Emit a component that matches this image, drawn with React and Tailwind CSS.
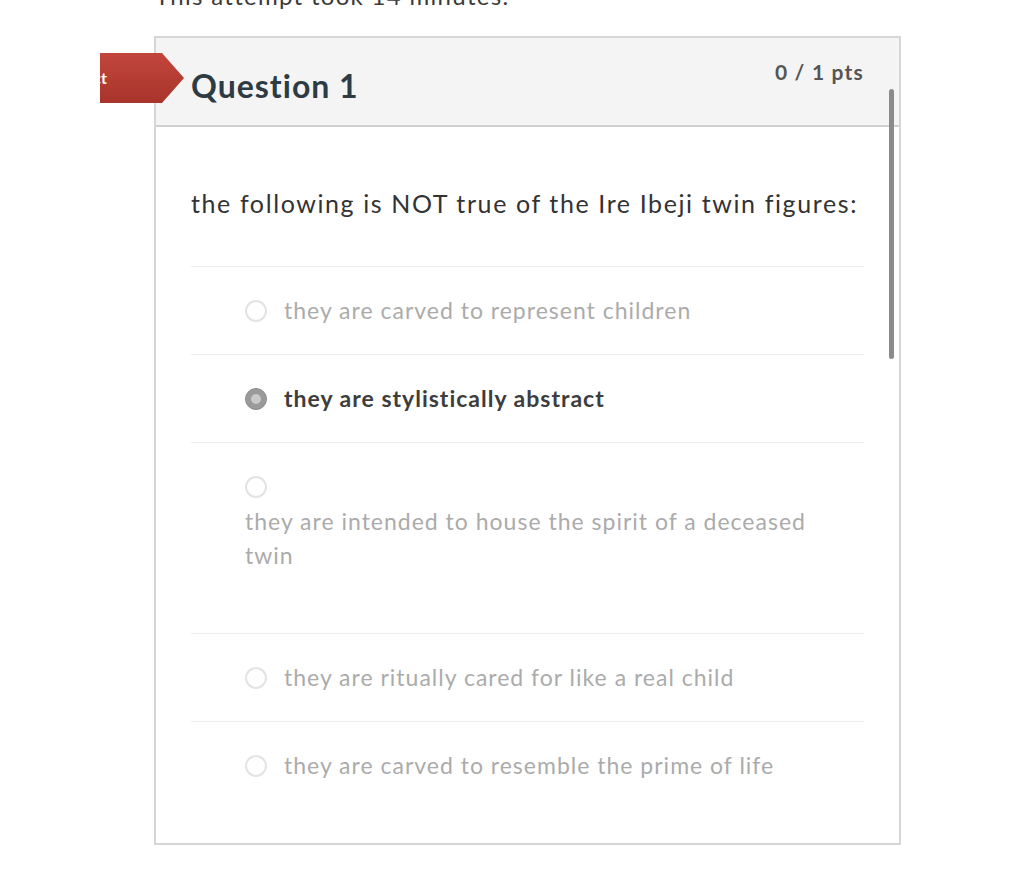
import React from 'react';

const answers = [
  { text: 'they are carved to represent children' },
  { text: 'they are stylistically abstract', selected: true },
  { text: 'they are intended to house the spirit of a deceased twin', stacked: true },
  { text: 'they are ritually cared for like a real child' },
  { text: 'they are carved to resemble the prime of life' },
];

function Radio({ selected }) {
  if (selected) {
    return (
      <span className="w-[22px] h-[22px] shrink-0 rounded-full bg-[#9a9a9a] flex items-center justify-center border border-[#8a8a8a]">
        <span className="w-[10px] h-[10px] rounded-full bg-[#c9c9c9]" />
      </span>
    );
  }
  return <span className="block w-[22px] h-[22px] shrink-0 rounded-full border-2 border-[#e3e3e3] bg-white" />;
}

function Answer({ a }) {
  if (a.stacked) {
    return (
      <div className="border-t border-[#ececec] h-[191px] pt-[33px] pl-[54px]">
        <Radio />
        <p className="mt-[6px] max-w-[575px] text-[23px] leading-[34px] text-[#ababab] tracking-[1px]">{a.text}</p>
      </div>
    );
  }
  return (
    <div className="border-t border-[#ececec] h-[88px] flex items-center gap-[17px] pl-[54px]">
      <Radio selected={a.selected} />
      <span
        className={`text-[23px] tracking-[1px] ${
          a.selected ? 'text-[#3d3d3d] font-bold tracking-[0.3px]' : 'text-[#ababab]'
        }`}
      >
        {a.text}
      </span>
    </div>
  );
}

export default function App() {
  return (
    <div className="min-h-[878px] bg-white font-['Lato','Liberation_Sans',sans-serif] overflow-hidden relative">
      <p className="absolute left-[155px] top-[-19px] text-[24px] leading-[30px] text-[#3a3a3a] tracking-[1.3px]">
        This attempt took 14 minutes.
      </p>

      <div className="pt-[36px] pl-[154px]">
        <div className="relative w-[747px] h-[809px] border-2 border-[#d6d6d6]">
          {/* header */}
          <div className="h-[89px] bg-[#f4f4f4] border-b-2 border-[#cfcfcf] flex items-start justify-between pl-[35px] pr-[35px]">
            <h2 className="mt-[30px] text-[32px] leading-[36px] font-bold text-[#2d3b45] tracking-[1px]">Question 1</h2>
            <span className="mt-[20px] text-[21px] leading-[28px] font-bold text-[#555] tracking-[1.2px]">0 / 1 pts</span>
          </div>

          {/* result tag */}
          <div className="absolute left-[-56px] top-[15px] w-[84px] h-[50px] overflow-hidden">
            <div className="h-full w-full bg-gradient-to-b from-[#c2463c] to-[#a8342b] [clip-path:polygon(0_0,62px_0,84px_50%,62px_100%,0_100%)] flex items-center justify-end pr-[77px]">
              <span className="text-white text-[16px] font-bold whitespace-nowrap">Incorrect</span>
            </div>
          </div>

          {/* scrollbar */}
          <div className="absolute right-[5px] top-[51px] w-[5px] h-[270px] rounded-full bg-[#8b8b8b]" />

          {/* body */}
          <div className="pl-[35px] pr-[35px]">
            <p className="pt-[58px] pb-[45px] text-[25px] leading-[36px] text-[#333] tracking-[1.6px]">
              the following is NOT true of the Ire Ibeji twin figures:
            </p>
            <div>
              {answers.map((a, i) => (
                <Answer key={i} a={a} />
              ))}
            </div>
          </div>
        </div>
      </div>
    </div>
  );
}
